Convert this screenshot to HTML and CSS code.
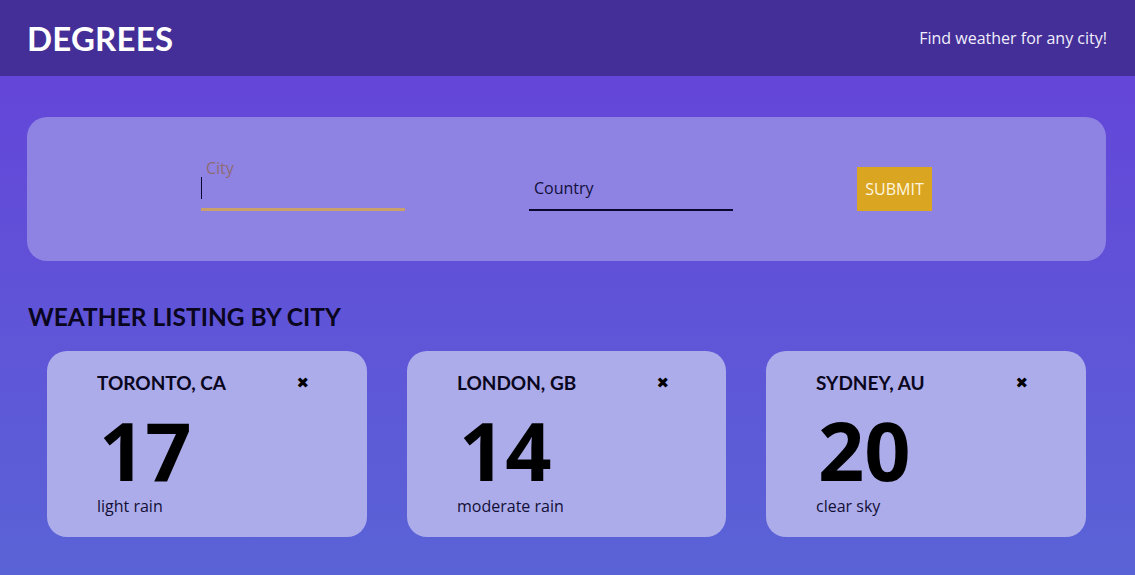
FILE: index.html
```html
<!DOCTYPE html>
<html lang="en">
<head>
<meta charset="utf-8">
<title>Degrees</title>
<link rel="stylesheet" href="styles.css">
</head>
<body>
<header class="topbar">
  <h1 class="brand">DEGREES</h1>
  <p class="tagline">Find weather for any city!</p>
</header>
<main class="main">
  <form class="search">
    <label class="field field-active">
      <span class="field-label">City</span>
      <span class="field-input"><span class="caret"></span></span>
    </label>
    <label class="field">
      <span class="field-input">Country</span>
    </label>
    <button type="button" class="submit">SUBMIT</button>
  </form>
  <h2 class="section-title">WEATHER LISTING BY CITY</h2>
  <div class="cards">
    <div class="card">
      <div class="card-head"><span class="city">TORONTO, CA</span><span class="close">&#x2716;</span></div>
      <div class="temp">17</div>
      <div class="desc">light rain</div>
    </div>
    <div class="card">
      <div class="card-head"><span class="city">LONDON, GB</span><span class="close">&#x2716;</span></div>
      <div class="temp">14</div>
      <div class="desc">moderate rain</div>
    </div>
    <div class="card">
      <div class="card-head"><span class="city">SYDNEY, AU</span><span class="close">&#x2716;</span></div>
      <div class="temp">20</div>
      <div class="desc">clear sky</div>
    </div>
  </div>
</main>
</body>
</html>
```

FILE: styles.css
```css
* { box-sizing: border-box; }
html, body { margin: 0; padding: 0; }
body {
  width: 1135px;
  height: 575px;
  overflow: hidden;
  font-family: "Open Sans", "Liberation Sans", sans-serif;
  background: linear-gradient(180deg, #6446d9 76px, #5a63d6 575px);
  color: #000;
}
.topbar {
  height: 76px;
  background: #432f97;
  display: flex;
  align-items: center;
  justify-content: space-between;
  padding: 0 28px 0 27px;
}
.brand {
  margin: 0;
  font-family: "Lato", "Noto Sans", sans-serif;
  font-weight: 700;
  font-size: 33px;
  letter-spacing: 0.2px;
  color: #fff;
}
.tagline {
  margin: 0;
  font-size: 16px;
  color: #f1eefc;
}
.main {
  padding: 41px 29px 0 27px;
}
.search {
  height: 144px;
  background: #8e82e3;
  border-radius: 20px;
  display: flex;
  align-items: flex-start;
  padding: 50px 0 0 174px;
}
.field {
  width: 204px;
  height: 44px;
  display: block;
  position: relative;
}
.field + .field { margin-left: 124px; }
.field-label {
  position: absolute;
  left: 5px;
  top: -10px;
  font-size: 16px;
  line-height: 22px;
  color: #8f6b73;
}
.field-input {
  display: flex;
  align-items: center;
  height: 44px;
  border-bottom: 2px solid #0b0730;
  font-size: 16px;
  color: #12103a;
  padding: 0 5px;
  line-height: 22px;
}
.field-active .field-input {
  border-bottom: 3px solid #c9a06c;
  align-items: flex-start;
}
.caret {
  display: block;
  width: 1px;
  height: 22px;
  background: #0b0730;
  margin-left: -5px;
  margin-top: 10px;
}
.submit {
  margin-left: 124px;
  width: 75px;
  height: 44px;
  background: #daa520;
  border: none;
  color: #fff7e0;
  font-family: "Open Sans", sans-serif;
  font-size: 16px;
  padding: 0;
}
.section-title {
  margin: 39px 0 0 1px;
  font-family: "Lato", "Noto Sans", sans-serif;
  font-weight: 700;
  font-size: 24.5px;
  line-height: 33px;
  color: #0a0620;
}
.cards {
  display: flex;
  gap: 40px;
  margin: 18px 0 0 20px;
}
.card {
  width: 320px;
  height: 186px;
  background: #acaceb;
  border-radius: 20px;
  padding: 20px 0 0 50px;
  flex: none;
}
.card:nth-child(2) { width: 319px; }
.card-head {
  display: flex;
  align-items: center;
  width: 214px;
  justify-content: space-between;
}
.city {
  font-family: "Lato", "Noto Sans", sans-serif;
  font-weight: 700;
  font-size: 19px;
  color: #0a0620;
  line-height: 24px;
}
.close {
  font-size: 15px;
  color: #000;
  font-family: "DejaVu Sans", sans-serif;
  line-height: 24px;
  margin-right: 2px;
}
.temp {
  font-family: "Open Sans", sans-serif;
  font-weight: 700;
  font-size: 81px;
  line-height: 80px;
  margin-top: 15px;
  padding-left: 2px;
  color: #000;
}
.desc {
  font-size: 16px;
  line-height: 22px;
  color: #120f35;
  margin-top: 5px;
}
```
